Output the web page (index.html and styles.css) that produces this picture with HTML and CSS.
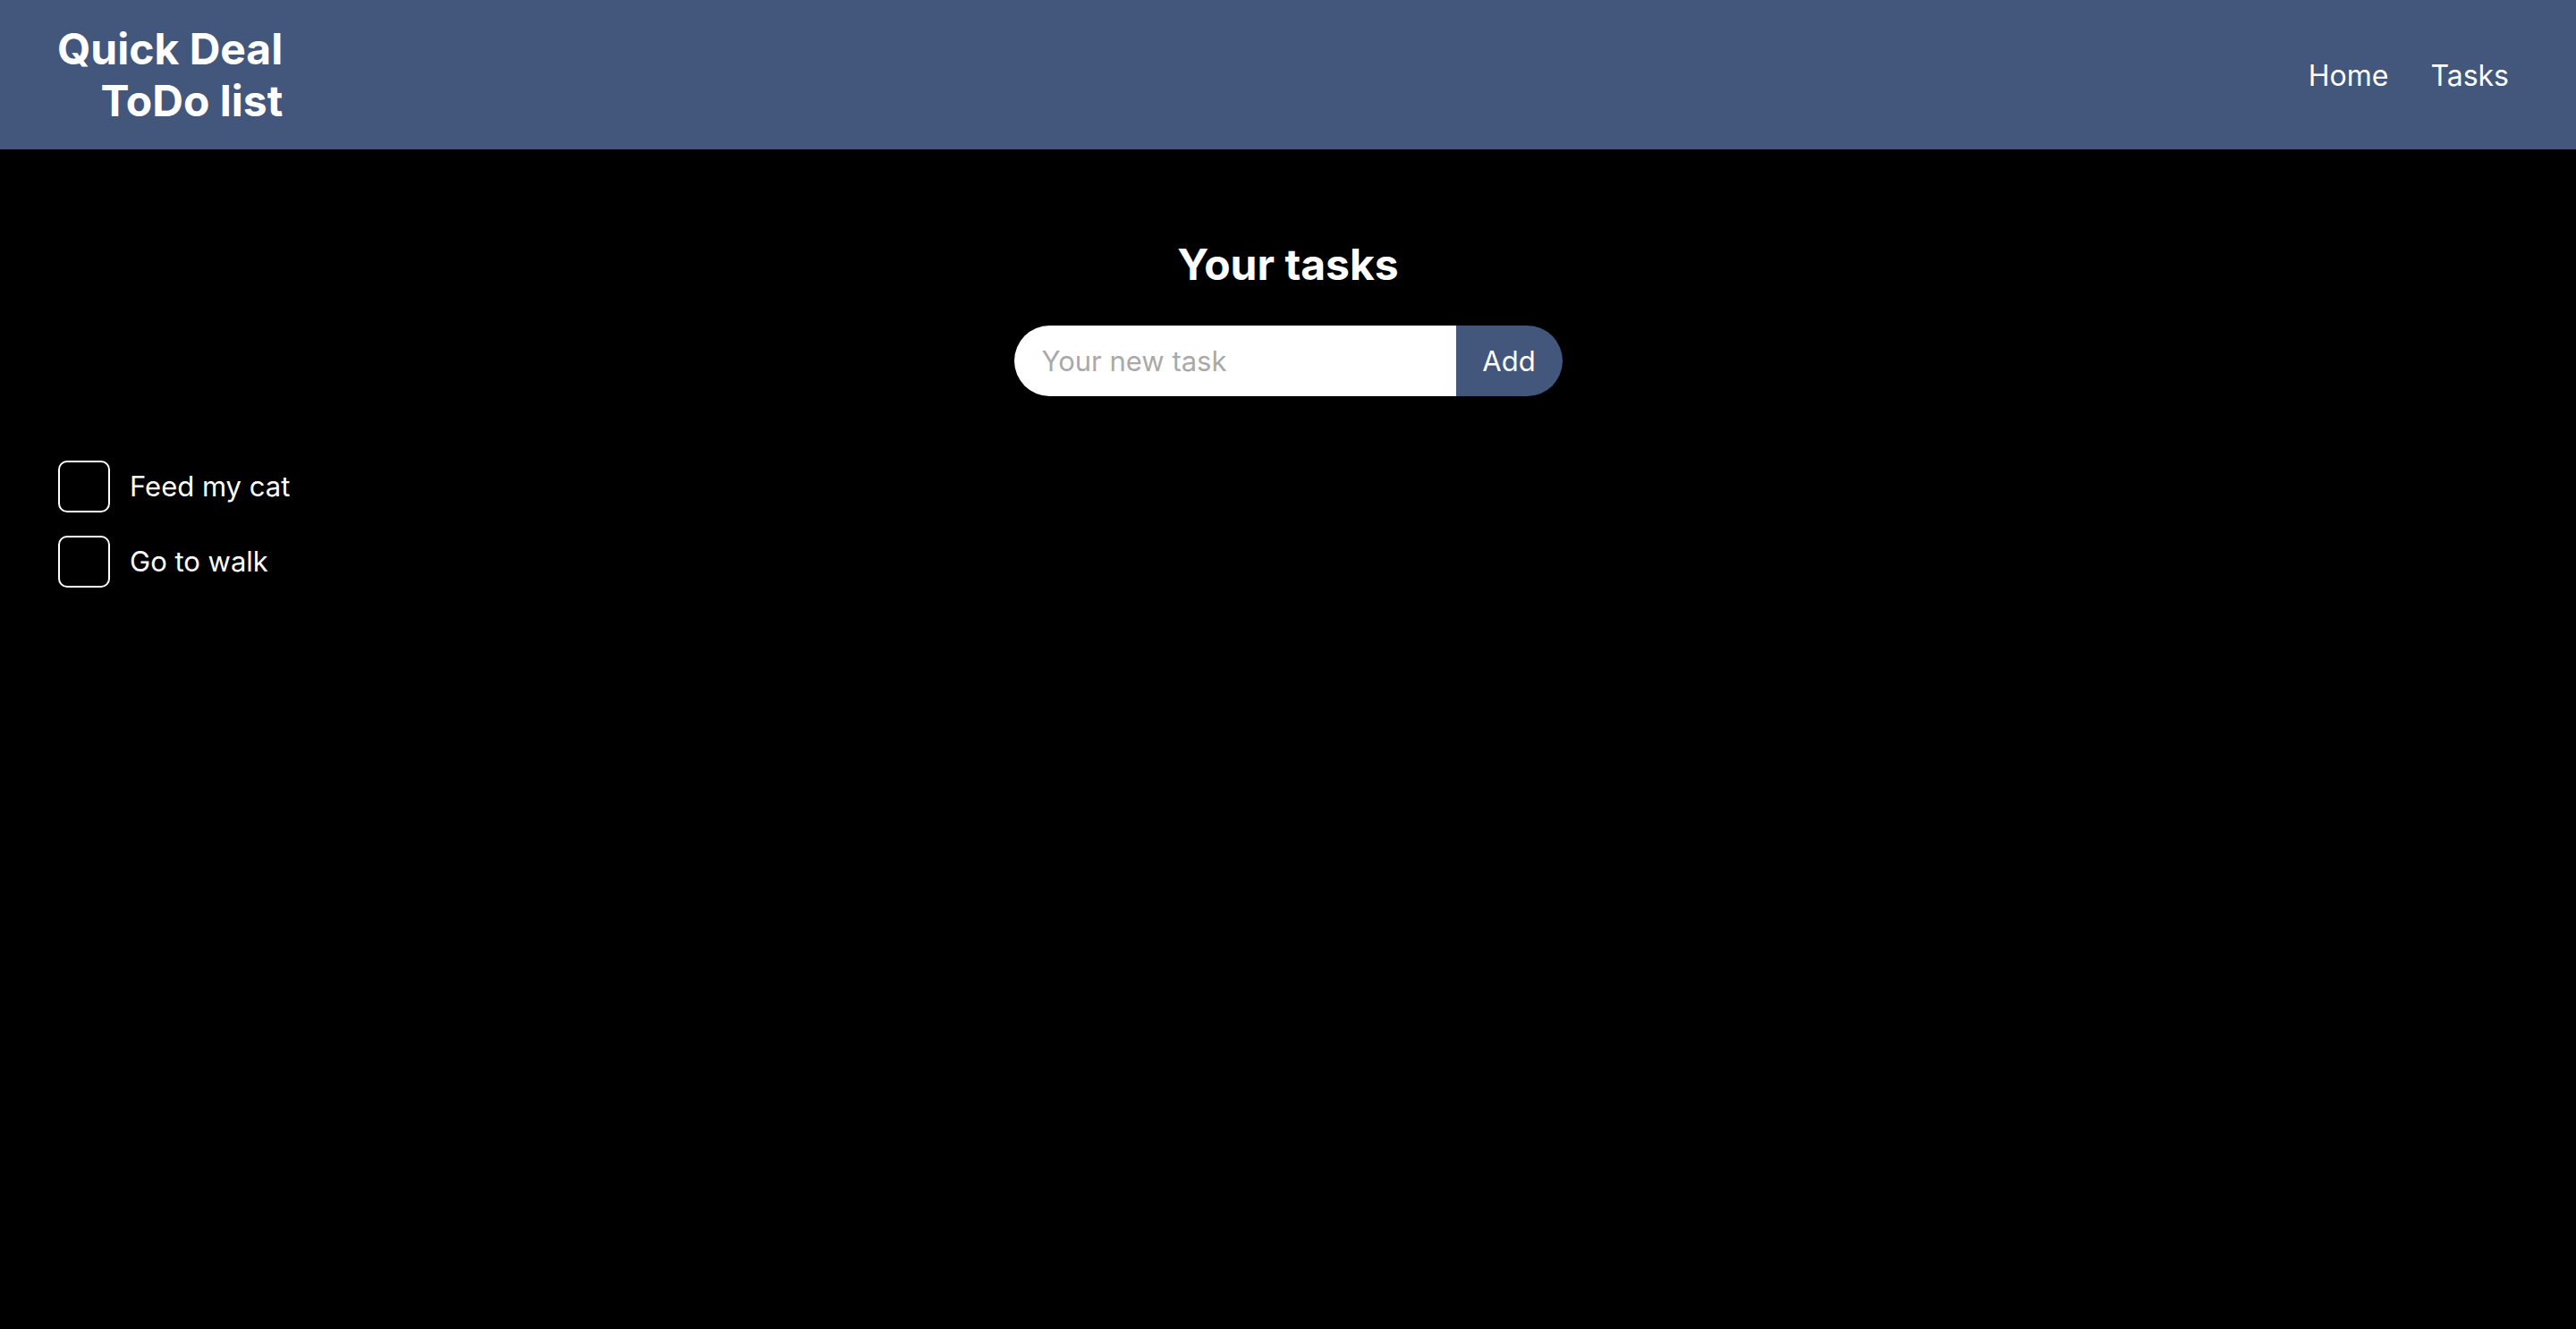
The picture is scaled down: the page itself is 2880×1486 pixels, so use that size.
FILE: index.html
```html
<!DOCTYPE html>
<html lang="en">
<head>
<meta charset="utf-8">
<title>Quick Deal ToDo list</title>
<link rel="stylesheet" href="styles.css">
</head>
<body>
<header class="topbar">
  <div class="brand">Quick Deal<br>ToDo list</div>
  <nav class="nav">
    <a class="nav-link" href="#">Home</a>
    <a class="nav-link" href="#">Tasks</a>
  </nav>
</header>
<main class="content">
  <h2 class="page-title">Your tasks</h2>
  <form class="add-form">
    <input class="task-input" type="text" placeholder="Your new task">
    <button class="add-btn" type="button">Add</button>
  </form>
  <ul class="task-list">
    <li class="task"><span class="check"></span><span class="task-text">Feed my cat</span></li>
    <li class="task"><span class="check"></span><span class="task-text">Go to walk</span></li>
  </ul>
</main>
</body>
</html>
```
FILE: styles.css
```css
* { box-sizing: border-box; }
html, body {
  margin: 0;
  padding: 0;
  background: #000;
  color: #fff;
  font-family: Inter, "Noto Sans", "Liberation Sans", sans-serif;
  min-height: 100%;
}
.topbar {
  height: 167px;
  background: #42577b;
  display: flex;
  justify-content: space-between;
  align-items: center;
  padding: 0 75px 0 64px;
}
.brand {
  text-align: right;
  font-weight: 700;
  font-size: 48px;
  line-height: 58px;
}
.nav {
  display: flex;
  gap: 47px;
  padding-top: 2px;
}
.nav-link {
  color: #fff;
  text-decoration: none;
  font-size: 32px;
}
.content {
  padding: 0 65px;
  display: flex;
  flex-direction: column;
}
.page-title {
  margin: 101px 0 0;
  text-align: center;
  font-size: 48px;
  line-height: 56px;
  font-weight: 700;
}
.add-form {
  margin: 40px auto 0;
  display: flex;
  height: 79px;
}
.task-input {
  width: 494px;
  height: 100%;
  border: none;
  outline: none;
  background: #fff;
  border-radius: 40px 0 0 40px;
  padding: 0 31px;
  font-family: inherit;
  font-size: 31px;
  color: #000;
}
.task-input::placeholder { color: #a9a9a9; }
.add-btn {
  width: 119px;
  height: 100%;
  border: none;
  background: #42577b;
  color: #fff;
  border-radius: 0 40px 40px 0;
  font-family: inherit;
  font-size: 31px;
  padding: 0;
}
.task-list {
  list-style: none;
  margin: 72px 0 0;
  padding: 0;
  display: flex;
  flex-direction: column;
  gap: 26px;
}
.task {
  display: flex;
  align-items: center;
  gap: 22px;
}
.check {
  width: 58px;
  height: 58px;
  border: 2px solid #fff;
  border-radius: 10px;
  flex: none;
}
.task-text {
  font-size: 31px;
  padding-bottom: 2px;
}
```
